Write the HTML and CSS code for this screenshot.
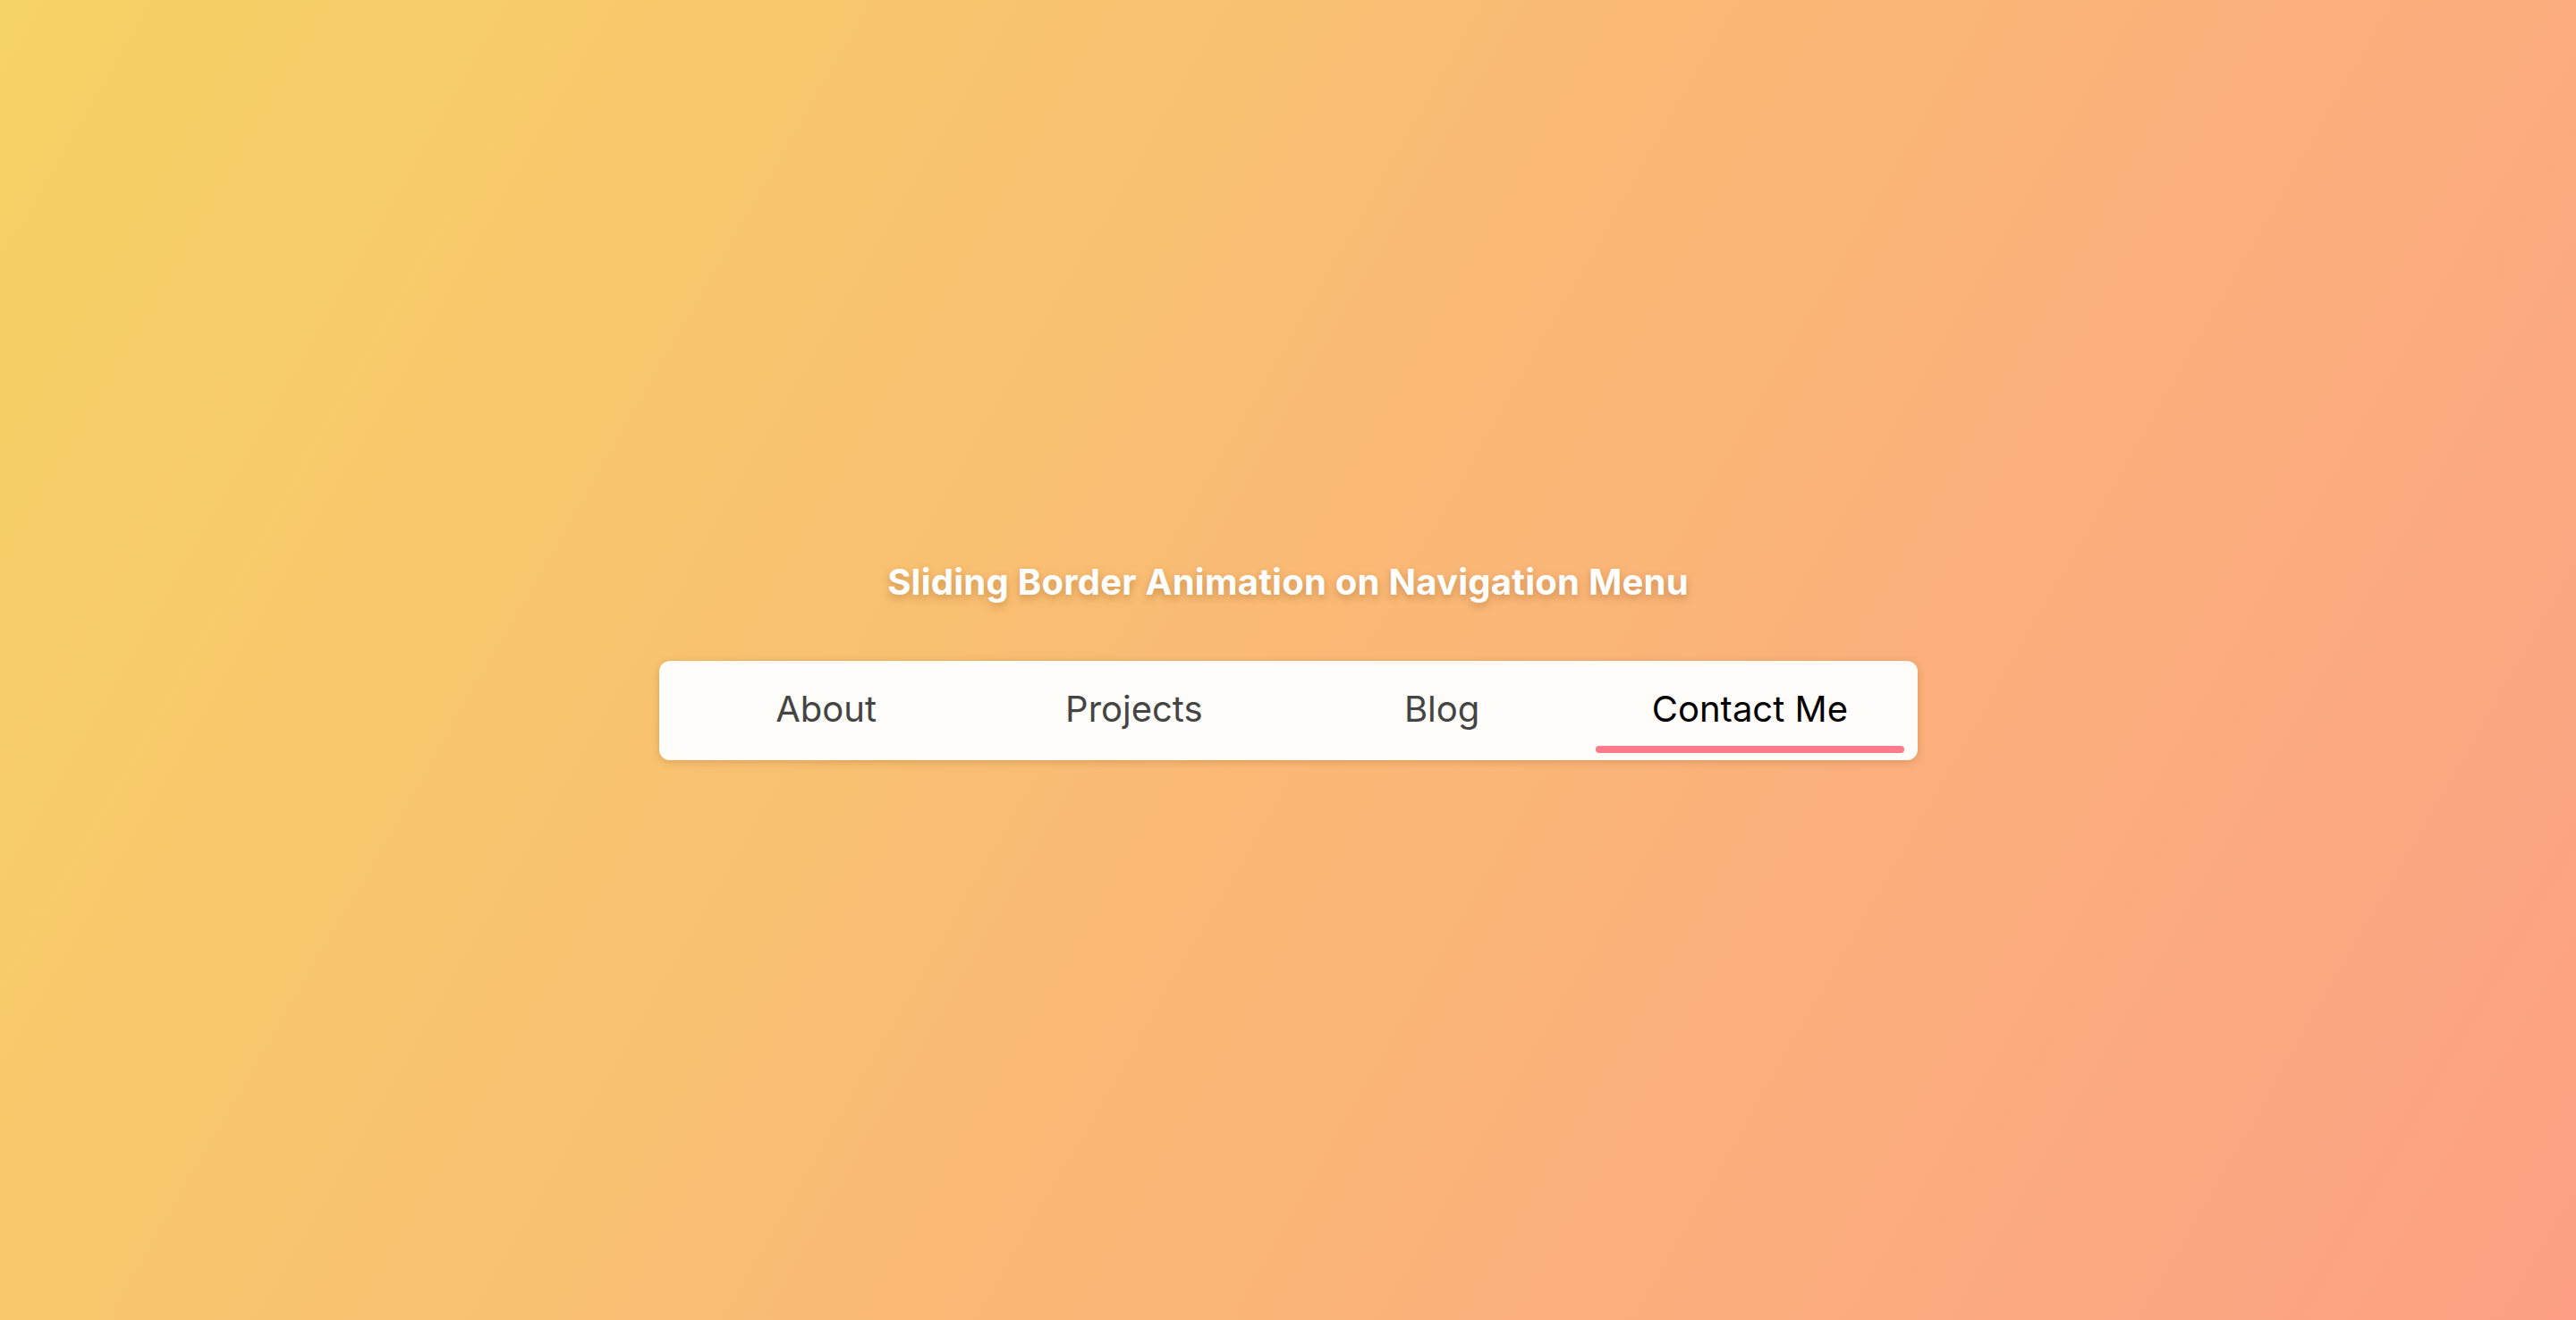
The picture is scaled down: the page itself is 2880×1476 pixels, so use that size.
FILE: index.html
```html
<!DOCTYPE html>
<html lang="en">
<head>
<meta charset="utf-8">
<title>Sliding Border Animation on Navigation Menu</title>
<link rel="stylesheet" href="styles.css">
</head>
<body>
<main class="page">
  <h1 class="title">Sliding Border Animation on Navigation Menu</h1>
  <nav class="menu">
    <a class="menu-item" href="#">About</a>
    <a class="menu-item" href="#">Projects</a>
    <a class="menu-item" href="#">Blog</a>
    <a class="menu-item active" href="#">Contact Me</a>
  </nav>
</main>
</body>
</html>
```
FILE: styles.css
```css
html, body {
  margin: 0;
  padding: 0;
  height: 100%;
}
body {
  background: linear-gradient(120deg, #f6d365 0%, #fda085 100%);
  font-family: Inter, "Noto Sans", sans-serif;
}
.page {
  height: 100%;
  display: flex;
  flex-direction: column;
  align-items: center;
  justify-content: center;
  gap: 64px;
}
.title {
  margin: 0;
  font-size: 40px;
  line-height: 48px;
  font-weight: 700;
  color: #fff;
  letter-spacing: 0.25px;
  text-shadow: 0 4px 8px rgba(150, 90, 30, 0.4);
}
.menu {
  position: relative;
  width: 1407px;
  height: 111px;
  box-sizing: border-box;
  padding: 0 15px 3px;
  display: flex;
  align-items: center;
  background: rgba(255, 255, 255, 0.96);
  border-radius: 12px;
  box-shadow: 0 2px 8px rgba(150, 90, 40, 0.3);
}
.menu-item {
  position: relative;
  flex: 1;
  align-self: stretch;
  display: flex;
  align-items: center;
  justify-content: center;
  font-size: 40px;
  color: #444;
  text-decoration: none;
}
.menu-item.active {
  color: #000;
}
.menu-item.active::after {
  content: "";
  position: absolute;
  left: 0;
  right: 0;
  bottom: 5px;
  height: 8px;
  border-radius: 4px;
  background: #ff7a8a;
}
```
